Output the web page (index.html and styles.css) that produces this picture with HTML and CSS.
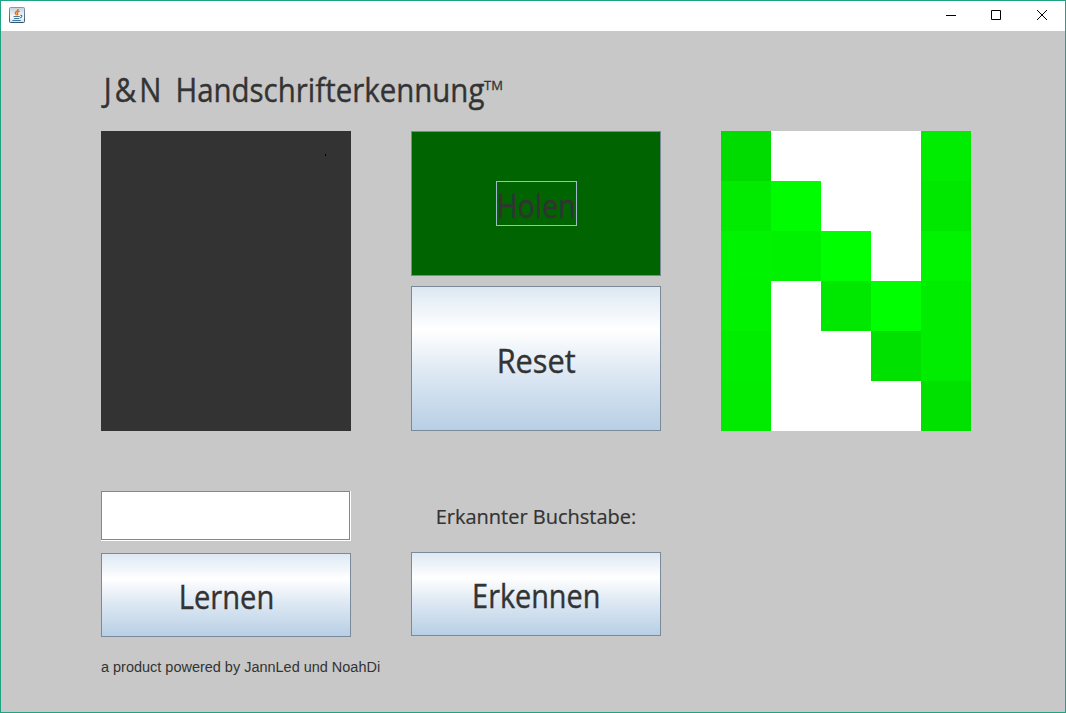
FILE: index.html
```html
<!DOCTYPE html>
<html lang="de">
<head>
<meta charset="utf-8">
<title>Handschrifterkennung</title>
<link rel="stylesheet" href="styles.css">
</head>
<body>
<div class="window">
  <header class="titlebar">
    <svg class="java" width="16" height="16" viewBox="0 0 16 16">
      <defs><linearGradient id="tile" x1="0" y1="0" x2="0" y2="1"><stop offset="0" stop-color="#7f9ab4"/><stop offset="1" stop-color="#32566f"/></linearGradient>
      <linearGradient id="face" x1="0" y1="0" x2="0" y2="1"><stop offset="0" stop-color="#c3d2df"/><stop offset=".6" stop-color="#fafafa"/><stop offset="1" stop-color="#d8dfe5"/></linearGradient></defs>
      <rect x=".5" y=".5" width="15" height="15" rx="1" fill="url(#face)" stroke="url(#tile)"/>
      <path d="M9.2 2C9.5 4 5.9 4.5 6.3 6.2 6.5 7 7.3 7.5 7.6 8.2M10.6 4.2C8.3 5 7.8 5.7 8.6 6.6 9 7.2 8.6 7.8 8.3 8.2" fill="none" stroke="#e8700f" stroke-width="1.4"/>
      <path d="M4.5 9.5H10.8M5 11.5H10.3M3.4 13.5H11.7M11.4 8.4C13.7 8 13.4 10.2 11 10.9" fill="none" stroke="#47799c" stroke-width="1.1"/>
    </svg>
    <div class="controls">
      <svg width="46" height="30" viewBox="0 0 46 30"><path d="M18 14.5H28"/></svg>
      <svg width="46" height="30" viewBox="0 0 46 30"><path d="M18.5 9.5H27.5V18.5H18.5Z"/></svg>
      <svg width="46" height="30" viewBox="0 0 46 30"><path d="M18 9L28 19M28 9L18 19"/></svg>
    </div>
  </header>
  <main class="content">
    <h1 class="title"><span class="name"><span class="initials">J&amp;N </span>Handschrifterkennung</span><span class="tm">TM</span></h1>
    <section class="upper">
      <div class="pad"><svg width="250" height="300"><path d="M224 23H225V25H224Z"/></svg></div>
      <div class="actions">
        <button class="button fetch"><span class="focus"><span class="holen">Holen</span></span></button>
        <button class="button"><span class="reset">Reset</span></button>
      </div>
      <div class="raster">
        <i class="g220"></i><i></i><i></i><i></i><i class="g236"></i>
        <i class="g235"></i><i class="g252"></i><i></i><i></i><i class="g232"></i>
        <i class="g243"></i><i class="g242"></i><i class="g255"></i><i></i><i class="g244"></i>
        <i class="g242"></i><i></i><i class="g232"></i><i class="g255"></i><i class="g237"></i>
        <i class="g237"></i><i></i><i></i><i class="g225"></i><i class="g236"></i>
        <i class="g235"></i><i></i><i></i><i></i><i class="g225"></i>
      </div>
    </section>
    <section class="lower">
      <div class="learn">
        <div class="field"><input class="input" type="text" aria-label="Buchstabe"></div>
        <button class="button short"><span class="lernen">Lernen</span></button>
      </div>
      <div class="recognise">
        <div class="result"><span>Erkannter Buchstabe:</span></div>
        <button class="button short"><span class="erkennen">Erkennen</span></button>
      </div>
    </section>
    <footer class="credit">a product powered by JannLed und NoahDi</footer>
  </main>
</div>
</body>
</html>
```
FILE: styles.css
```css
* { box-sizing: border-box; }
body { margin: 0; overflow: hidden; }
.window { width: 1066px; height: 713px; border: 1px solid #1fa383; background: #c8c8c8; color: #333; font-family: "Comic Sans MS", "Open Sans", sans-serif; }
.titlebar { height: 30px; background: #fff; display: flex; justify-content: space-between; }
.java { margin: 6px 0 0 8px; }
.controls { display: flex; }
.controls svg { fill: none; stroke: #000; stroke-width: 1; }
.controls svg:nth-child(1) { margin-right: -1px; }
.content { padding-left: 100px; }
.title { margin: 0; height: 100px; padding-top: 37px; display: flex; font-weight: 400; white-space: nowrap; }
.name { width: 383px; padding-left: 3px; font-size: 32px; line-height: 44px; transform: scaleX(.92); transform-origin: left; -webkit-text-stroke: .4px #333; }
.initials { letter-spacing: 3.4px; }
.tm { font-size: 13px; line-height: 34px; -webkit-text-stroke: .3px #333; }
.upper { display: grid; grid-template-columns: repeat(3, 250px); column-gap: 60px; height: 300px; }
.pad { background: #333; }
.pad svg { display: block; fill: #000; }
.actions { display: grid; grid-template-rows: 145px 145px; row-gap: 10px; }
.button { width: 250px; padding: 0; border: 1px solid #7a8a99; border-radius: 0; display: flex; align-items: center; justify-content: center; font: 32px/44px "Comic Sans MS", "Open Sans", sans-serif; color: #333; background: linear-gradient(#dde8f3, #fff 30%, #dde8f3 60%, #b8cfe5); -webkit-text-stroke: .4px #333; }
.fetch { background: #006400; }
.focus { width: 81px; height: 45px; border: 1px solid #a3b8cc; display: flex; justify-content: center; line-height: 47px; }
.holen { transform: scaleX(.89); }
.reset { padding-top: 4px; transform: scaleX(.96); }
.lernen { padding-top: 4px; transform: scaleX(.91); }
.erkennen { padding-top: 4px; transform: scaleX(.9); }
.raster { display: grid; grid-template-columns: repeat(5, 50px); grid-template-rows: repeat(6, 50px); background: #fff; }
.g220 { background: #00dc00; }
.g225 { background: #00e100; }
.g232 { background: #00e800; }
.g235 { background: #00eb00; }
.g236 { background: #00ec00; }
.g237 { background: #00ed00; }
.g242 { background: #00f200; }
.g243 { background: #00f300; }
.g244 { background: #00f400; }
.g252 { background: #00fc00; }
.g255 { background: #00ff00; }
.lower { display: grid; grid-template-columns: repeat(2, 250px); column-gap: 60px; padding-top: 60px; height: 206px; }
.learn { display: flex; flex-direction: column; gap: 12px; }
.recognise { display: flex; flex-direction: column; gap: 11px; }
.field { height: 50px; background: #fff; padding: 0 1px 1px 0; display: flex; }
.input { width: 249px; height: 49px; border: 1px solid #7a8a99; border-radius: 0; padding: 2px; background: #fff; font: inherit; }
.short { height: 84px; }
.result { height: 50px; padding-top: 2px; display: flex; align-items: center; justify-content: center; font-size: 20px; line-height: 28px; white-space: nowrap; -webkit-text-stroke: .2px #333; }
.credit { padding-top: 20px; font: 14.48px/20px "Liberation Sans", Arial, sans-serif; }
```
